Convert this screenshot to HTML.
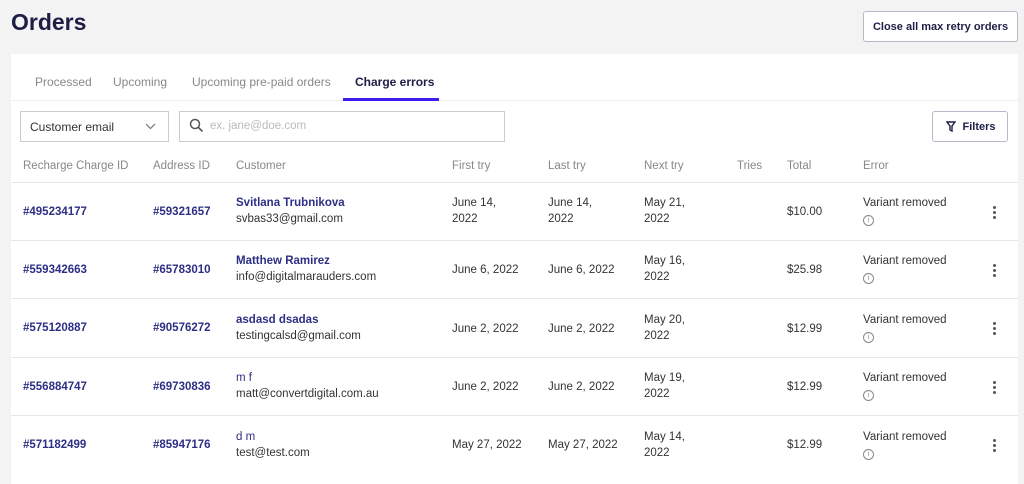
<!DOCTYPE html>
<html><head><meta charset="utf-8"><style>
*{margin:0;padding:0;box-sizing:border-box}
body{width:1024px;height:474px;background:#f3f3f4;font-family:"Liberation Sans",sans-serif;position:relative;overflow:hidden;color:#333}
.a{position:absolute;white-space:nowrap}
h1{position:absolute;left:11px;top:9px;font-size:23px;font-weight:bold;color:#1d1e45}
.btn{position:absolute;border:1px solid #b8b8c8;border-radius:3px;background:#fff;font-size:11px;font-weight:bold;color:#1d1e45;display:flex;align-items:center;justify-content:center;white-space:nowrap}
.card{position:absolute;left:11px;top:54px;width:1007px;height:430px;background:#fff}
.tab{position:absolute;top:75px;font-size:12px;color:#888}
.hd{position:absolute;top:160px;font-size:11.5px;color:#888}
.ln{position:absolute;left:11px;width:1007px;height:1px;background:#e6e6e9}
.lk{color:#2d2f85;font-weight:bold;font-size:11.5px}
.nm{color:#2d2f85;font-size:11.5px;font-weight:bold}
.t{font-size:11.5px;color:#333;line-height:16px}
.dots{position:absolute;left:993px;width:4px}
.dots i{display:block;width:3px;height:3px;border-radius:50%;background:#555;margin-bottom:2px}
.info{display:inline-block;width:11px;height:11px;border:1px solid #888;border-radius:50%;font-size:7px;text-align:center;line-height:9px;color:#888;font-style:normal;margin-top:2px}
.r{margin-top:2px}
</style></head><body>
<h1>Orders</h1>
<div class="btn" style="left:863px;top:11px;width:155px;height:31px">Close all max retry orders</div>
<div class="card"></div>
<div class="tab" style="left:35px">Processed</div>
<div class="tab" style="left:113px">Upcoming</div>
<div class="tab" style="left:192px">Upcoming pre-paid orders</div>
<div class="tab" style="left:355px;color:#1d1e45;font-weight:bold">Charge errors</div>
<div class="ln" style="top:100px;background:#eee"></div>
<div class="a" style="left:343px;top:98px;width:96px;height:3px;background:#3f1df0"></div>
<div class="a" style="left:20px;top:111px;width:149px;height:31px;border:1px solid #ccc;font-size:12px;padding:8px 9px;color:#333">Customer email</div>
<svg class="a" style="left:145px;top:123px" width="11" height="7"><path d="M1 1l4.5 4.5L10 1" fill="none" stroke="#777" stroke-width="1.2"/></svg>
<div class="a" style="left:179px;top:111px;width:326px;height:31px;border:1px solid #ccc;font-size:11.5px;padding:8px 0 0 30px;color:#bbb">ex. jane@doe.com</div>
<svg class="a" style="left:189px;top:118px" width="15" height="15"><circle cx="6" cy="6" r="4.5" fill="none" stroke="#555" stroke-width="1.5"/><path d="M9.5 9.5l4 4" stroke="#555" stroke-width="1.6"/></svg>
<div class="btn" style="left:932px;top:111px;width:76px;height:31px;padding-left:18px">Filters</div>
<svg class="a" style="left:946px;top:121px" width="10" height="11"><path d="M1 1h8L6 5v5l-2-1V5z" fill="none" stroke="#1d1e45" stroke-width="1.4"/></svg>
<div class="hd" style="left:23px">Recharge Charge ID</div>
<div class="hd" style="left:153px">Address ID</div>
<div class="hd" style="left:236px">Customer</div>
<div class="hd" style="left:452px">First try</div>
<div class="hd" style="left:548px">Last try</div>
<div class="hd" style="left:644px">Next try</div>
<div class="hd" style="left:737px">Tries</div>
<div class="hd" style="left:787px">Total</div>
<div class="hd" style="left:863px">Error</div>
<div class="ln" style="top:182px"></div>
<div class="ln" style="top:240px"></div>
<div class="ln" style="top:298px"></div>
<div class="ln" style="top:357px"></div>
<div class="ln" style="top:415px"></div>

<div class="a lk" style="left:23px;top:206px">#495234177</div>
<div class="a lk" style="left:153px;top:206px">#59321657</div>
<div class="a t" style="left:236px;top:195px"><span class="nm">Svitlana Trubnikova</span><br>svbas33@gmail.com</div>
<div class="a t" style="left:452px;top:195px">June 14,<br>2022</div>
<div class="a t" style="left:548px;top:195px">June 14,<br>2022</div>
<div class="a t" style="left:644px;top:195px">May 21,<br>2022</div>
<div class="a t" style="left:787px;top:204px">$10.00</div>
<div class="a t" style="left:863px;top:195px">Variant removed<br><i class="info">i</i></div>
<div class="dots" style="top:206px"><i></i><i></i><i></i></div>

<div class="a lk" style="left:23px;top:264px">#559342663</div>
<div class="a lk" style="left:153px;top:264px">#65783010</div>
<div class="a t" style="left:236px;top:253px"><span class="nm">Matthew Ramirez</span><br>info@digitalmarauders.com</div>
<div class="a t" style="left:452px;top:262px">June 6, 2022</div>
<div class="a t" style="left:548px;top:262px">June 6, 2022</div>
<div class="a t" style="left:644px;top:253px">May 16,<br>2022</div>
<div class="a t" style="left:787px;top:262px">$25.98</div>
<div class="a t" style="left:863px;top:253px">Variant removed<br><i class="info">i</i></div>
<div class="dots" style="top:264px"><i></i><i></i><i></i></div>

<div class="a lk" style="left:23px;top:322px">#575120887</div>
<div class="a lk" style="left:153px;top:322px">#90576272</div>
<div class="a t" style="left:236px;top:312px"><span class="nm">asdasd dsadas</span><br>testingcalsd@gmail.com</div>
<div class="a t" style="left:452px;top:321px">June 2, 2022</div>
<div class="a t" style="left:548px;top:321px">June 2, 2022</div>
<div class="a t" style="left:644px;top:312px">May 20,<br>2022</div>
<div class="a t" style="left:787px;top:321px">$12.99</div>
<div class="a t" style="left:863px;top:312px">Variant removed<br><i class="info">i</i></div>
<div class="dots" style="top:322px"><i></i><i></i><i></i></div>

<div class="a lk" style="left:23px;top:381px">#556884747</div>
<div class="a lk" style="left:153px;top:381px">#69730836</div>
<div class="a t" style="left:236px;top:370px"><span class="nm" style="font-weight:normal">m f</span><br>matt@convertdigital.com.au</div>
<div class="a t" style="left:452px;top:379px">June 2, 2022</div>
<div class="a t" style="left:548px;top:379px">June 2, 2022</div>
<div class="a t" style="left:644px;top:370px">May 19,<br>2022</div>
<div class="a t" style="left:787px;top:379px">$12.99</div>
<div class="a t" style="left:863px;top:370px">Variant removed<br><i class="info">i</i></div>
<div class="dots" style="top:381px"><i></i><i></i><i></i></div>

<div class="a lk" style="left:23px;top:439px">#571182499</div>
<div class="a lk" style="left:153px;top:439px">#85947176</div>
<div class="a t" style="left:236px;top:429px"><span class="nm" style="font-weight:normal">d m</span><br>test@test.com</div>
<div class="a t" style="left:452px;top:437px">May 27, 2022</div>
<div class="a t" style="left:548px;top:437px">May 27, 2022</div>
<div class="a t" style="left:644px;top:429px">May 14,<br>2022</div>
<div class="a t" style="left:787px;top:437px">$12.99</div>
<div class="a t" style="left:863px;top:429px">Variant removed<br><i class="info">i</i></div>
<div class="dots" style="top:439px"><i></i><i></i><i></i></div>
</body></html>
